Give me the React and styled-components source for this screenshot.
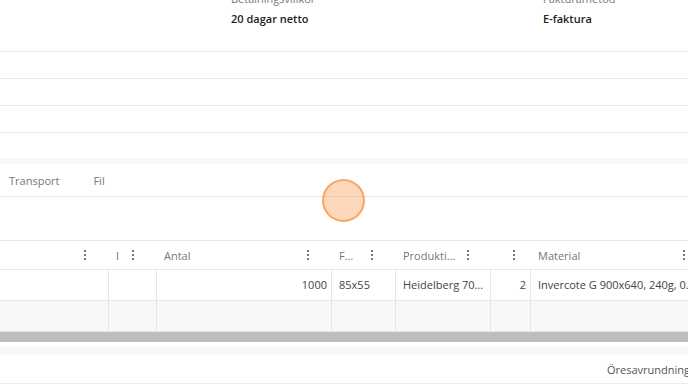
import styled, { createGlobalStyle } from "styled-components";

const Global = createGlobalStyle`
  body {
    margin: 0;
    background: #fff;
    font-family: "Open Sans", "Noto Sans", sans-serif;
    overflow: hidden;
  }
`;

const columns = [
  { w: 109, label: "", gap: 22 },
  { w: 48, label: "I", gap: 22 },
  { w: 175, label: "Antal", gap: 22 },
  { w: 64, label: "F…", gap: 22 },
  { w: 95, label: "Produkti…", gap: 21 },
  { w: 40, label: "", gap: 15 },
  { w: 177, label: "Material", gap: 22 },
];

const rowOne = [
  { text: "" },
  { text: "" },
  { text: "1000", num: true },
  { text: "85x55" },
  { text: "Heidelberg 70 x 100" },
  { text: "2", num: true },
  { text: "Invercote G 900x640, 240g, 0.3mm" },
];

const Kebab = () => (
  <svg width="4" height="12" viewBox="0 0 4 12">
    <circle cx="2" cy="2" r="1.1" fill="#555" />
    <circle cx="2" cy="6" r="1.1" fill="#555" />
    <circle cx="2" cy="10" r="1.1" fill="#555" />
  </svg>
);

const App = () => {
  const template = columns.map((c) => c.w + "px").join(" ");
  return (
    <Page>
      <Global />
      <Info>
        <Field>
          <Label>Betalningsvillkor</Label>
          <Value>20 dagar netto</Value>
        </Field>
        <Field>
          <Label>Fakturametod</Label>
          <Value>E-faktura</Value>
        </Field>
      </Info>
      <EmptyRow />
      <EmptyRow />
      <EmptyRow />
      <Strip />
      <Tabs>
        <Tab>Transport</Tab>
        <Tab>Fil</Tab>
      </Tabs>
      <Blank />
      <Grid>
        <HeadRow style={{ gridTemplateColumns: template }}>
          {columns.map((c, i) => (
            <HeadCell key={i}>
              <HeadLabel>{c.label}</HeadLabel>
              <KebabBox $gap={c.gap}>
                <Kebab />
              </KebabBox>
            </HeadCell>
          ))}
        </HeadRow>
        <DataRow style={{ gridTemplateColumns: template }}>
          {rowOne.map((c, i) => (
            <Cell key={i} $num={c.num}>
              {c.text}
            </Cell>
          ))}
        </DataRow>
        <DataRow $alt style={{ gridTemplateColumns: template }}>
          {rowOne.map((c, i) => (
            <Cell key={i} />
          ))}
        </DataRow>
        <Scrollbar />
      </Grid>
      <Strip $small />
      <Footer>
        <FooterText>Öresavrundning</FooterText>
      </Footer>
      <Touch />
    </Page>
  );
};

const Page = styled.div`
  position: relative;
  width: 688px;
  height: 384px;
  overflow: hidden;
`;

const Info = styled.div`
  display: grid;
  grid-template-columns: 312px auto;
  padding-left: 231px;
  margin-top: -8px;
  height: 59px;
  border-bottom: 1px solid #e6e6e6;
`;

const Field = styled.div`
  display: flex;
  flex-direction: column;
`;

const Label = styled.div`
  font-size: 11px;
  line-height: 14px;
  color: #777;
`;

const Value = styled.div`
  margin-top: 6px;
  font-size: 11px;
  line-height: 14px;
  font-weight: 600;
  color: #222;
`;

const EmptyRow = styled.div`
  height: 26px;
  border-bottom: 1px solid #e6e6e6;
`;

const Strip = styled.div`
  margin-top: ${(p) => (p.$small ? "5px" : "25px")};
  height: ${(p) => (p.$small ? "8px" : "6px")};
  background: #f6f7f9;
`;

const Tabs = styled.div`
  display: flex;
  align-items: center;
  gap: 34px;
  height: 32px;
  padding-left: 9px;
  border-bottom: 1px solid #e6e6e6;
`;

const Tab = styled.div`
  font-size: 11px;
  color: #777;
`;

const Blank = styled.div`
  height: 43px;
`;

const Grid = styled.div`
  border-top: 1px solid #e6e6e6;
`;

const HeadRow = styled.div`
  display: grid;
  height: 28px;
  border-bottom: 1px solid #e6e6e6;
`;

const HeadCell = styled.div`
  display: flex;
  align-items: center;
  padding-left: 7px;
  min-width: 0;
`;

const HeadLabel = styled.div`
  flex: 1;
  min-width: 0;
  font-size: 11px;
  color: #777;
  white-space: nowrap;
  overflow: hidden;
`;

const KebabBox = styled.div`
  display: flex;
  margin-right: ${(p) => p.$gap}px;
`;

const DataRow = styled.div`
  display: grid;
  height: 30px;
  border-bottom: 1px solid #e6e6e6;
  background: ${(p) => (p.$alt ? "#f7f8fa" : "#fff")};
`;

const Cell = styled.div`
  line-height: 30px;
  text-align: ${(p) => (p.$num ? "right" : "left")};
  padding: 0 ${(p) => (p.$num ? "4px" : "6px")} 0 7px;
  border-right: 1px solid #e6e6e6;
  font-size: 11px;
  color: #444;
  white-space: nowrap;
  overflow: hidden;
  text-overflow: ellipsis;
  min-width: 0;
`;

const Scrollbar = styled.div`
  height: 10px;
  background: #bdbdbd;
`;

const Footer = styled.div`
  display: flex;
  align-items: center;
  justify-content: flex-end;
  height: 28px;
  border-bottom: 1px solid #eeeeee;
`;

const FooterText = styled.div`
  font-size: 11px;
  color: #555;
  margin-right: -2px;
`;

const Touch = styled.div`
  position: absolute;
  left: 322px;
  top: 179px;
  width: 39px;
  height: 39px;
  border-radius: 50%;
  background: rgba(251, 160, 90, 0.42);
  border: 2px solid rgba(248, 150, 70, 0.75);
`;

export default App;
